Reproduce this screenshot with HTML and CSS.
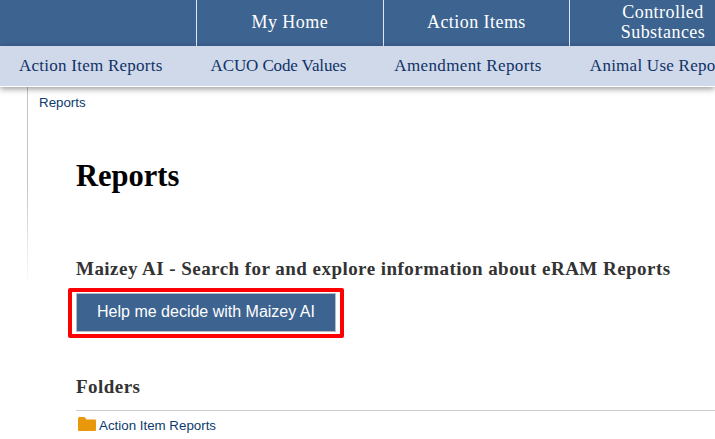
FILE: index.html
```html
<!DOCTYPE html>
<html lang="en">
<head>
<meta charset="utf-8">
<title>Reports</title>
<link rel="stylesheet" href="styles.css">
</head>
<body>
<nav class="topnav">
  <div class="topnav-spacer"></div>
  <a class="topnav-item">My Home</a>
  <a class="topnav-item">Action Items</a>
  <a class="topnav-item">Controlled Substances</a>
</nav>
<nav class="subnav">
  <a class="subnav-item">Action Item Reports</a>
  <a class="subnav-item subnav-item-caps">ACUO Code Values</a>
  <a class="subnav-item subnav-item-wide">Amendment Reports</a>
  <a class="subnav-item">Animal Use Reports</a>
</nav>
<div class="page">
  <aside class="sidebar"></aside>
  <div class="content">
    <div class="breadcrumb">Reports</div>
    <main class="main">
      <h1 class="title">Reports</h1>
      <h2 class="section-title">Maizey AI - Search for and explore information about eRAM Reports</h2>
      <div class="highlight"><button class="maizey-btn">Help me decide with Maizey AI</button></div>
      <h2 class="section-title folders-title">Folders</h2>
      <div class="folder-row">
        <svg class="folder-icon" viewBox="0 0 18 14" aria-hidden="true"><path d="M1.5 0H6.5L8.5 2.5H17a1 1 0 0 1 1 1V13a1 1 0 0 1-1 1H1a1 1 0 0 1-1-1V1.5A1.5 1.5 0 0 1 1.5 0Z"/></svg>
        <a class="folder-link">Action Item Reports</a>
      </div>
    </main>
  </div>
</div>
</body>
</html>
```
FILE: styles.css
```css
html, body { margin: 0; padding: 0; height: 100%; overflow: hidden; background: #fff; }
body { width: 715px; height: 439px; overflow: hidden; font-family: "Liberation Sans", Arial, sans-serif; }

.topnav { display: flex; height: 46px; background: #3d6390; overflow: hidden; }
.topnav-spacer { width: 196px; flex: none; }
.topnav-item {
  flex: none; border-left: 1px solid #dfe6ef; box-sizing: content-box;
  display: flex; align-items: center; justify-content: center; text-align: center;
  padding: 0 40px 2px; width: 105.6px;
  font: 18px/20px "Liberation Serif", serif; letter-spacing: 0.45px; color: #fff;
}

.subnav {
  display: flex; height: 40px; align-items: center; gap: 48px; padding-left: 19px; overflow: hidden;
  background: #d0d9e9; border-bottom: 1px solid #fff; box-shadow: 0 2px 6px rgba(0,0,0,.4); position: relative;
}
.subnav-item { flex: none; font: 17px "Liberation Serif", serif; letter-spacing: 0.25px; color: #0f3268; white-space: nowrap; }
.subnav-item-caps { letter-spacing: -0.12px; }
.subnav-item-wide { letter-spacing: 0.38px; }

.page { display: flex; }
.sidebar { width: 27px; height: 198px; flex: none; border-right: 1px solid; border-image: linear-gradient(#c4c4c4, #c4c4c4 50%, #fff) 1; }
.content { flex: 1; padding-left: 11px; min-width: 0; }
.breadcrumb { font-size: 13.33px; line-height: 16px; color: #0d3b6e; padding-top: 8px; }
.main { padding-left: 37px; }
.title { margin: 46px 0 0; font: bold 30.5px/38px "Liberation Serif", serif; color: #000; }
.section-title { margin: 0; font: bold 19px/22px "Liberation Serif", serif; letter-spacing: 0.46px; color: #333; }
.title + .section-title { margin-top: 63px; }
.highlight {
  margin: 8px 0 0 -8px; width: 276px; height: 50px; box-sizing: border-box;
  border: 4px solid #f00; border-radius: 2px; padding: 1px 4px;
}
.maizey-btn {
  display: block; width: 260px; height: 39px; box-sizing: border-box; margin: 0; padding: 0 0 2px;
  background: #3d6390; border: 1px solid #b4bcc8; color: #fff;
  font: 16px "Liberation Sans", Arial, sans-serif;
}
.folders-title { margin-top: 38px; }
.folder-row { margin-top: 12px; border-top: 1px solid #ccc; padding: 6px 0 0 2px; display: flex; align-items: flex-start; gap: 3px; }
.folder-icon { width: 18px; height: 14px; fill: #e9970b; flex: none; }
.folder-link { margin-top: 2px; font-size: 13.33px; line-height: 14px; color: #0d3b6e; }
```
